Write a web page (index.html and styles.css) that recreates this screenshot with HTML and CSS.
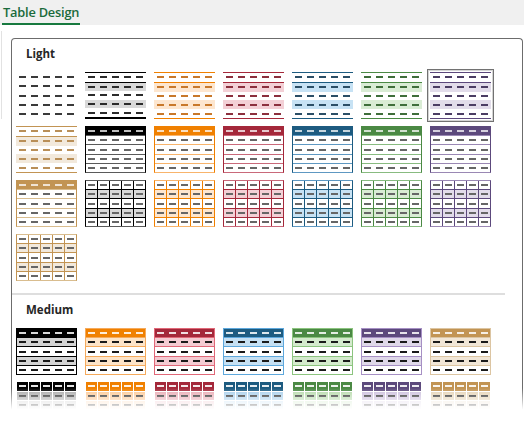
FILE: index.html
```html
<!DOCTYPE html>
<html lang="en">
<head>
    <meta charset="UTF-8" />
    <title>Table Design</title>
    <link rel="stylesheet" href="styles.css">
</head>
<body>
    <div class="ribbon">
        <span class="tab">Table Design</span>
    </div>

    <div class="workspace">
        <div class="gutter"><div class="gutter-line"></div></div>

        <div class="gallery">
            <div class="sec-title">Light</div>
            <div class="styles">
                <!-- row 1 -->
                <div class="opt"><div class="tb none"><i></i><i></i><i></i><i></i><i></i></div></div>
                <div class="opt"><div class="tb lt k"><i></i><i></i><i></i><i></i><i></i></div></div>
                <div class="opt"><div class="tb lt o"><i></i><i></i><i></i><i></i><i></i></div></div>
                <div class="opt"><div class="tb lt r"><i></i><i></i><i></i><i></i><i></i></div></div>
                <div class="opt"><div class="tb lt b"><i></i><i></i><i></i><i></i><i></i></div></div>
                <div class="opt"><div class="tb lt g"><i></i><i></i><i></i><i></i><i></i></div></div>
                <div class="opt sel"><div class="tb lt p"><i></i><i></i><i></i><i></i><i></i></div></div>
                <!-- row 2 -->
                <div class="opt"><div class="tb lt y"><i></i><i></i><i></i><i></i><i></i></div></div>
                <div class="opt"><div class="tb hd k"><i></i><i></i><i></i><i></i><i></i></div></div>
                <div class="opt"><div class="tb hd o"><i></i><i></i><i></i><i></i><i></i></div></div>
                <div class="opt"><div class="tb hd r"><i></i><i></i><i></i><i></i><i></i></div></div>
                <div class="opt"><div class="tb hd b"><i></i><i></i><i></i><i></i><i></i></div></div>
                <div class="opt"><div class="tb hd g"><i></i><i></i><i></i><i></i><i></i></div></div>
                <div class="opt"><div class="tb hd p"><i></i><i></i><i></i><i></i><i></i></div></div>
                <!-- row 3 -->
                <div class="opt"><div class="tb hd y"><i></i><i></i><i></i><i></i><i></i></div></div>
                <div class="opt"><div class="tb gr k"><i></i><i></i><i></i><i></i><i></i></div></div>
                <div class="opt"><div class="tb gr o"><i></i><i></i><i></i><i></i><i></i></div></div>
                <div class="opt"><div class="tb gr r"><i></i><i></i><i></i><i></i><i></i></div></div>
                <div class="opt"><div class="tb gr b"><i></i><i></i><i></i><i></i><i></i></div></div>
                <div class="opt"><div class="tb gr g"><i></i><i></i><i></i><i></i><i></i></div></div>
                <div class="opt"><div class="tb gr p"><i></i><i></i><i></i><i></i><i></i></div></div>
                <!-- row 4 -->
                <div class="opt"><div class="tb gr y"><i></i><i></i><i></i><i></i><i></i></div></div>
            </div>

            <div class="sep"></div>

            <div class="sec-title">Medium</div>
            <div class="styles">
                <div class="opt"><div class="tb md k"><i></i><i></i><i></i><i></i><i></i></div></div>
                <div class="opt"><div class="tb md o"><i></i><i></i><i></i><i></i><i></i></div></div>
                <div class="opt"><div class="tb md r"><i></i><i></i><i></i><i></i><i></i></div></div>
                <div class="opt"><div class="tb md b"><i></i><i></i><i></i><i></i><i></i></div></div>
                <div class="opt"><div class="tb md g"><i></i><i></i><i></i><i></i><i></i></div></div>
                <div class="opt"><div class="tb md p"><i></i><i></i><i></i><i></i><i></i></div></div>
                <div class="opt"><div class="tb md y"><i></i><i></i><i></i><i></i><i></i></div></div>

                <div class="opt"><div class="tb m2 k"><i></i><i></i><i></i><i></i><i></i></div></div>
                <div class="opt"><div class="tb m2 o"><i></i><i></i><i></i><i></i><i></i></div></div>
                <div class="opt"><div class="tb m2 r"><i></i><i></i><i></i><i></i><i></i></div></div>
                <div class="opt"><div class="tb m2 b"><i></i><i></i><i></i><i></i><i></i></div></div>
                <div class="opt"><div class="tb m2 g"><i></i><i></i><i></i><i></i><i></i></div></div>
                <div class="opt"><div class="tb m2 p"><i></i><i></i><i></i><i></i><i></i></div></div>
                <div class="opt"><div class="tb m2 y"><i></i><i></i><i></i><i></i><i></i></div></div>
            </div>
        </div>
    </div>

    <!-- gallery fades out at the bottom edge -->
    <div class="fade"></div>
</body>
</html>
```

FILE: styles.css
```css
* {
    box-sizing: border-box;
}
body {
    margin: 0;
    height: 424px;
    overflow: hidden;
    position: relative;
    background: #fff;
    font-family: "Open Sans", "Noto Sans", sans-serif;
    color: #262626;
}
.ribbon {
    height: 25px;
    background: #f0f0f0;
    padding-left: 2px;
}
.tab {
    display: inline-block;
    font-size: 12.8px;
    font-weight: 600;
    letter-spacing: -0.2px;
    line-height: 21px;
    padding: 0 1px;
    color: #1a6a3b;
    border-bottom: 2px solid #17793f;
}
.workspace {
    display: flex;
    padding-top: 6px;
}
.gutter {
    width: 11px;
    flex-shrink: 0;
}
.gutter-line {
    width: 1px;
    height: 88px;
    margin-left: 1px;
    background: #e2e2e2;
}
.gallery {
    width: 512px;
    height: 400px;
    margin-top: 7px;
    border: 1px solid #6c6c6c;
    border-bottom: none;
    border-radius: 4px 4px 0 0;
    background: #fff;
}
.sec-title {
    font-size: 11.5px;
    font-weight: 700;
    line-height: 16px;
    padding: 7px 0 7px 14px;
    color: #262626;
}
.styles {
    display: grid;
    grid-template-columns: repeat(7, 67px);
    column-gap: 2px;
    row-gap: 1px;
    padding-left: 1px;
}
.opt {
    padding: 3px;
}
.opt.sel {
    box-shadow: inset 0 0 0 1px #727272, inset 0 0 0 2px #d4d4d4;
}
.sep {
    height: 2px;
    margin: 9px 17px 0 0;
    background: #dedede;
}

/* colour themes */
.k { --c: #000; --band: #d9d9d9; --dl: #2b2b2b; --m: #5a5a5a; --mo: #000; --mb: #d4d4d4; --m2: #a6a6a6; --m3: #dadada; }
.o { --c: #f08000; --band: #fde6cf; --dl: #c8782a; --m: #f8b46c; --mo: #f5aa5c; --mb: #fde4c8; --m2: #fcc690; --m3: #fee5cc; }
.r { --c: #a4283a; --band: #f3d0d6; --dl: #8b2f3d; --m: #c9697a; --mo: #e06878; --mb: #f4cbd2; --m2: #e8a6b0; --m3: #f5d4d9; }
.b { --c: #1d5b80; --band: #c7e2f4; --dl: #2b4e66; --m: #5e98c2; --mo: #5ea8dc; --mb: #c5e0f3; --m2: #a4cdeb; --m3: #d3e8f6; }
.g { --c: #4b8944; --band: #d9ecd4; --dl: #3f6e3a; --m: #88bb80; --mo: #8cc47f; --mb: #d4eacd; --m2: #b3d8a7; --m3: #dcefd6; }
.p { --c: #5c497c; --band: #e2dcea; --dl: #4b3d63; --m: #9a88b4; --mo: #a690c4; --mb: #dfd8e9; --m2: #c9bcdc; --m3: #e6e0ee; }
.y { --c: #c29453; --band: #f2e9dc; --dl: #b98f58; --m: #d9bd8f; --mo: #dcc5a2; --mb: #f1e6d6; --m2: #e4d2b3; --m3: #f3ebdf; }

/* thumbnail: 5 rows, each row draws its own 5 dashes */
.tb {
    width: 61px;
    height: 47px;
    display: flex;
    flex-direction: column;
    --dash: #666;
    --dx: 2px;
}
.tb i {
    flex: 1;
    display: block;
    background: linear-gradient(90deg, var(--dash) 7px, transparent 7px) var(--dx) 50% / 12px 2px repeat-x;
}

/* no style */
.none {
    --dash: #3a3a3a;
    --dx: 3px;
}

/* light 1-7: lines only, banded */
.lt {
    --dash: var(--dl);
    --dx: 3px;
    border-top: 1px solid var(--c);
    border-bottom: 1px solid var(--c);
}
.lt i:first-child {
    border-bottom: 1px solid var(--c);
}
.lt i:nth-child(even) {
    background-color: var(--band);
}
.lt.k {
    border-bottom-width: 2px;
}

/* light 8-14: filled header */
.hd {
    border: 1px solid var(--c);
    border-bottom-color: var(--m);
}
.hd i + i {
    border-top: 1px solid var(--m);
}
.hd i:first-child {
    --dash: rgba(255, 255, 255, 0.75);
    background-color: var(--c);
}

/* light 15-21: full grid */
.gr {
    border: 1px solid var(--c);
    border-top-color: var(--m);
    border-bottom-color: var(--m);
}
.gr i {
    background:
        linear-gradient(90deg, var(--dash) 7px, transparent 7px) var(--dx) 50% / 12px 2px repeat-x,
        linear-gradient(90deg, var(--c) 1px, transparent 1px) 11px 0 / 12px 100% repeat-x;
}
.gr i + i {
    border-top: 1px solid var(--c);
}
.gr i:nth-child(even) {
    background-color: var(--band);
}

/* medium 1-7 */
.md {
    --dash: #1a1a1a;
    border: 1px solid var(--mo);
}
.md i + i {
    border-top: 1px solid var(--mo);
}
.md i:first-child {
    --dash: rgba(255, 255, 255, 0.85);
    background-color: var(--c);
}
.md i:nth-child(even) {
    background-color: var(--mb);
}

/* medium 8-14: cells split by white gaps */
.m2 {
    --dash: #1a1a1a;
}
.m2 i {
    background:
        linear-gradient(90deg, var(--dash) 7px, transparent 7px) 3px 50% / 12px 2px repeat-x,
        linear-gradient(90deg, #fff 1px, transparent 1px) 12px 0 / 12px 100% repeat-x;
    background-color: var(--m3);
}
.m2 i + i {
    border-top: 1px solid #fff;
}
.m2 i:first-child {
    --dash: rgba(255, 255, 255, 0.9);
    background-color: var(--c);
}
.m2 i:nth-child(even) {
    background-color: var(--m2);
}

.fade {
    position: absolute;
    left: 0;
    right: 0;
    bottom: 0;
    height: 36px;
    background: linear-gradient(rgba(255, 255, 255, 0), #fff 60%);
}
```
